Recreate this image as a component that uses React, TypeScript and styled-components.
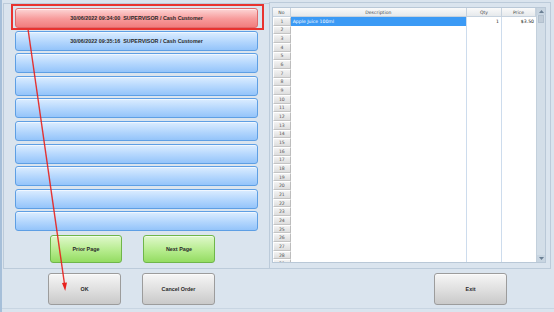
import * as React from "react";
import styled, { createGlobalStyle, css } from "styled-components";

const GlobalStyle = createGlobalStyle`
  html, body {
    margin: 0;
    padding: 0;
    background: #dae4ee;
  }
  * {
    box-sizing: border-box;
  }
`;

type Tone = "red" | "blue" | "green" | "gray";

const tones: Record<Tone, ReturnType<typeof css>> = {
  red: css`
    background: linear-gradient(#fcd6d6, #f79a9a 55%, #f27e7e);
    border: 1px solid #e06a6a;
  `,
  blue: css`
    background: linear-gradient(#dcedff, #b3d6fd 55%, #94c4fa);
    border: 1px solid #5e9fe4;
  `,
  green: css`
    background: linear-gradient(#e0f8cc, #b6ec8e 55%, #94dc62);
    border: 1px solid #6fb64a;
  `,
  gray: css`
    background: linear-gradient(#f6f6f6, #dedede 55%, #c9c9c9);
    border: 1px solid #9c9c9c;
  `,
};

const orders = [
  "30/06/2022 09:34:00  SUPERVISOR / Cash Customer",
  "30/06/2022 09:35:16  SUPERVISOR / Cash Customer",
  "",
  "",
  "",
  "",
  "",
  "",
  "",
  "",
];

const ROW_COUNT = 29;

export default function App() {
  return (
    <>
      <GlobalStyle />
      <Window>
        <Top>
          <OrdersPanel>
            <OrderList>
              {orders.map((label, i) => (
                <OrderSlot key={i} $marked={i === 0}>
                  <Button $tone={i === 0 ? "red" : "blue"} $h={20}>
                    {label}
                  </Button>
                </OrderSlot>
              ))}
            </OrderList>
            <PagerRow>
              <Button $tone="green" $w={72} $h={28}>
                Prior Page
              </Button>
              <Button $tone="green" $w={72} $h={28}>
                Next Page
              </Button>
            </PagerRow>
          </OrdersPanel>

          <DetailPanel>
            <Table>
              <Grid>
                <HeaderRow>
                  <HeadCell>No</HeadCell>
                  <HeadCell>Description</HeadCell>
                  <HeadCell>Qty</HeadCell>
                  <HeadCell>Price</HeadCell>
                </HeaderRow>
                <Body>
                  {Array.from({ length: ROW_COUNT }, (_, i) => (
                    <Row key={i}>
                      <NumCell>{i + 1}</NumCell>
                      <Cell $selected={i === 0}>{i === 0 ? "Apple Juice 100ml" : ""}</Cell>
                      <Cell $right>{i === 0 ? "1" : ""}</Cell>
                      <Cell $right $last>{i === 0 ? "$3.50" : ""}</Cell>
                    </Row>
                  ))}
                </Body>
              </Grid>
              <Scrollbar>
                <ScrollArrow>
                  <svg width="5" height="3" viewBox="0 0 5 3">
                    <path d="M0 3 L2.5 0 L5 3 Z" fill="#6a7f93" />
                  </svg>
                </ScrollArrow>
                <Thumb />
                <Track />
                <ScrollArrow>
                  <svg width="5" height="3" viewBox="0 0 5 3">
                    <path d="M0 0 L2.5 3 L5 0 Z" fill="#6a7f93" />
                  </svg>
                </ScrollArrow>
              </Scrollbar>
            </Table>
          </DetailPanel>
        </Top>

        <Bottom>
          <Button $tone="gray" $w={73} $h={32}>
            OK
          </Button>
          <Button $tone="gray" $w={73} $h={32}>
            Cancel Order
          </Button>
          <Spacer />
          <Button $tone="gray" $w={73} $h={32}>
            Exit
          </Button>
        </Bottom>

        <Annotation width="554" height="312" viewBox="0 0 554 312">
          <line x1="26" y1="29" x2="62.5" y2="284" stroke="#e8211d" strokeWidth="1.4" opacity="0.9" />
          <path d="M60 283 L63.2 291 L65 282.6 Z" fill="#e8211d" />
        </Annotation>
      </Window>
    </>
  );
}

const Window = styled.div`
  position: relative;
  width: 554px;
  height: 312px;
  overflow: hidden;
  background: #dae4ee;
  border-left: 2px solid #a6bfd9;
  font-family: "DejaVu Sans", Tahoma, sans-serif;
  display: flex;
  flex-direction: column;
`;

const Top = styled.div`
  display: flex;
  padding: 2px 0 0 1px;
  height: 269px;
`;

const OrdersPanel = styled.section`
  width: 266px;
  margin-top: 1px;
  border: 1px solid #bccbda;
  border-right: none;
  display: flex;
  flex-direction: column;
  padding: 4px 11px 0 11px;
`;

const OrderList = styled.div`
  display: flex;
  flex-direction: column;
  gap: 2.6px;
`;

const OrderSlot = styled.div<{ $marked?: boolean }>`
  position: relative;
  ${(p) =>
    p.$marked &&
    css`
      &::after {
        content: "";
        position: absolute;
        inset: -4px -6px -2px -4px;
        border: 2px solid #e8332f;
        pointer-events: none;
        z-index: 1;
      }
    `}
`;

const Button = styled.div<{ $tone: Tone; $w?: number; $h: number }>`
  ${(p) => tones[p.$tone]}
  width: ${(p) => (p.$w ? `${p.$w}px` : "100%")};
  height: ${(p) => p.$h}px;
  border-radius: 3px;
  display: flex;
  align-items: center;
  justify-content: center;
  font-family: "Liberation Sans", Arial, sans-serif;
  font-size: 5.4px;
  font-weight: bold;
  color: #2a2a2a;
  white-space: pre;
  box-shadow: inset 0 1px 0 rgba(255, 255, 255, 0.6);
`;

const PagerRow = styled.div`
  display: flex;
  gap: 21px;
  padding-left: 35px;
  margin-top: 4px;
`;

const DetailPanel = styled.section`
  flex: 1;
  margin-right: 3px;
  border: 1px solid #bccbda;
  padding: 4px 4px 5px 2px;
  display: flex;
`;

const Table = styled.div`
  flex: 1;
  display: flex;
  border: 1px solid #b9c8d7;
  background: #ffffff;
  overflow: hidden;
`;

const Grid = styled.div`
  flex: 1;
  display: flex;
  flex-direction: column;
  min-width: 0;
`;

const columns = "17.7px 176.3px 35px 1fr";

const HeaderRow = styled.div`
  display: grid;
  grid-template-columns: ${columns};
  height: 9px;
  flex: none;
`;

const HeadCell = styled.div`
  background: linear-gradient(#fafafa, #e6e9ec);
  border-right: 1px solid #c6d2de;
  border-bottom: 1px solid #c6d2de;
  font-size: 4.6px;
  color: #4a4a4a;
  display: flex;
  align-items: center;
  justify-content: center;
`;

const Body = styled.div`
  flex: 1;
  overflow: hidden;
`;

const Row = styled.div`
  display: grid;
  grid-template-columns: ${columns};
  height: 8.67px;
`;

const NumCell = styled.div`
  background: linear-gradient(#f3f3f3, #dedede);
  border: 1px solid #ffffff;
  border-right-color: #bcbcbc;
  border-bottom-color: #c4c4c4;
  font-size: 4.6px;
  color: #555;
  display: flex;
  align-items: center;
  justify-content: center;
`;

const Cell = styled.div<{ $selected?: boolean; $right?: boolean; $last?: boolean }>`
  border-right: ${(p) => (p.$last ? "none" : "1px solid #cddced")};
  font-size: 4.6px;
  display: flex;
  align-items: center;
  padding: 0 2px;
  justify-content: ${(p) => (p.$right ? "flex-end" : "flex-start")};
  background: ${(p) => (p.$selected ? "#3b9af5" : "#ffffff")};
  color: ${(p) => (p.$selected ? "#ffffff" : "#222")};
`;

const Scrollbar = styled.div`
  width: 9px;
  flex: none;
  display: flex;
  flex-direction: column;
  background: #d3dee8;
  border-left: 1px solid #c3d0dc;
`;

const ScrollArrow = styled.div`
  height: 7px;
  display: flex;
  align-items: center;
  justify-content: center;
  background: #c8d5e1;
`;

const Thumb = styled.div`
  height: 8px;
  margin: 0 1px;
  background: #c0ccd8;
  border: 1px solid #b2c0ce;
`;

const Track = styled.div`
  flex: 1;
`;

const Bottom = styled.div`
  display: flex;
  align-items: flex-start;
  gap: 21px;
  padding: 4px 0 0 46px;
  flex: 1;
  padding-right: 47px;
  border-bottom: 1px solid #c8d5e2;
  margin-bottom: 3px;
`;

const Spacer = styled.div`
  flex: 1;
`;

const Annotation = styled.svg`
  position: absolute;
  left: 0;
  top: 0;
  pointer-events: none;
`;
